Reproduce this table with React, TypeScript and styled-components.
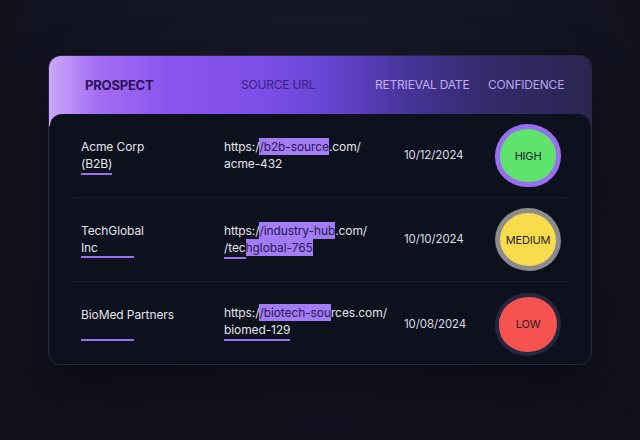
import React from "react";
import styled, { createGlobalStyle } from "styled-components";

const Global = createGlobalStyle`
  html, body { margin: 0; padding: 0; }
  body {
    width: 640px; height: 440px; overflow: hidden;
    background: radial-gradient(ellipse at 50% 30%, #181a2b 0%, #131422 55%, #0f1019 100%);
    font-family: Inter, "Noto Sans", sans-serif;
  }
`;

const Page = styled.div`
  width: 640px;
  height: 440px;
  box-sizing: border-box;
  padding: 55px 48px 0 48px;
`;

const Card = styled.div`
  width: 544px;
  height: 310px;
  box-sizing: border-box;
  border-radius: 13px;
  border: 1px solid rgba(150, 150, 200, 0.14);
  background: #141627;
  display: flex;
  flex-direction: column;
  overflow: hidden;
  box-shadow: 0 20px 50px rgba(0, 0, 0, 0.45);
`;

const Header = styled.div`
  height: 70px;
  flex: none;
  margin-bottom: -12px;
  background: linear-gradient(90deg, #c9a8f8 0%, #a46df4 9%, #8a55ee 22%, #7c4ee8 40%, #6644d0 52%, #47349a 66%, #342a6c 80%, #2a2650 100%);
  display: grid;
  grid-template-columns: 156px 134px 113px 1fr;
  padding: 21px 0 0 36px;
  box-sizing: border-box;
  font-size: 12px;
  letter-spacing: -0.2px;
`;

const HeadCell = styled.div<{ $color: string; $bold?: boolean }>`
  color: ${(p) => p.$color};
  font-weight: ${(p) => (p.$bold ? 700 : 400)};
  font-size: ${(p) => (p.$bold ? "13px" : "12px")};
  line-height: 16px;
`;

const Body = styled.div`
  flex: 1;
  margin: 0 1px 1px 1px;
  background: #0d101d;
  border-radius: 12px 12px 10px 10px;
  position: relative;
  display: flex;
  flex-direction: column;
  padding: 0 24px;
`;

const Row = styled.div<{ $last?: boolean }>`
  height: 84px;
  box-sizing: border-box;
  display: grid;
  grid-template-columns: 143px 180px 92px 66px;
  align-items: center;
  padding-left: 7px;
  border-bottom: ${(p) => (p.$last ? "none" : "1px solid #1b1e2d")};
`;

const Text = styled.div`
  color: #e4e4ec;
  font-size: 12px;
  line-height: 17px;
  letter-spacing: -0.1px;
`;

const NameCell = styled(Text)<{ $offset: number }>`
  align-self: start;
  padding-top: ${(p) => p.$offset}px;
`;

const Underline = styled.span`
  display: inline-block;
  border-bottom: 2px solid #9a6ff0;
  padding-bottom: 1px;
`;

const BarLine = styled.div<{ $w: number; $top: number }>`
  width: ${(p) => p.$w}px;
  height: 2px;
  background: #9a6ff0;
  margin-top: ${(p) => p.$top}px;
`;

const Mark = styled.span`
  background: #a37cf5;
  color: #2a1b55;
  padding: 1px 0;
`;

const UrlCell = styled(Text)<{ $offset: number }>`
  align-self: start;
  padding-top: ${(p) => p.$offset}px;
`;

const DateCell = styled(Text)`
  font-size: 11.5px;
  color: #dcdce6;
`;

const Badge = styled.div<{ $bg: string; $ring: string; $radius: string; $w: number }>`
  width: 66px;
  height: 63px;
  margin-left: -1px;
  box-sizing: border-box;
  border-radius: ${(p) => p.$radius};
  background: ${(p) => p.$bg};
  border: ${(p) => p.$w}px solid ${(p) => p.$ring};
  display: flex;
  align-items: center;
  justify-content: center;
  color: #1f2430;
  font-size: 11px;
  letter-spacing: -0.2px;
`;

export default function App() {
  return (
    <>
      <Global />
      <Page>
        <Card>
          <Header>
            <HeadCell $color="#2a1458" $bold>PROSPECT</HeadCell>
            <HeadCell $color="#3a2180">SOURCE URL</HeadCell>
            <HeadCell $color="#c4aef3">RETRIEVAL DATE</HeadCell>
            <HeadCell $color="#b9a4ef">CONFIDENCE</HeadCell>
          </Header>
          <Body>
            <Row>
              <NameCell $offset={24}>
                Acme Corp
                <br />
                <Underline>(B2B)</Underline>
              </NameCell>
              <UrlCell $offset={24}>
                https:/<Mark>/b2b-source</Mark>.com/
                <br />
                acme-432
              </UrlCell>
              <DateCell>10/12/2024</DateCell>
              <Badge $w={5} $bg="#5ee36c" $ring="#9a6ef2" $radius="50% 52% 48% 50% / 52% 50% 50% 48%">HIGH</Badge>
            </Row>
            <Row>
              <NameCell $offset={24}>
                TechGlobal
                <br />
                Inc
                <BarLine $w={53} $top={0} />
              </NameCell>
              <UrlCell $offset={24}>
                https:/<Mark>/industry-hub</Mark>.com/
                <br />
                <Underline>/tec</Underline>
                <Mark>hglobal-765</Mark>
              </UrlCell>
              <DateCell>10/10/2024</DateCell>
              <Badge $w={5} $bg="#f8dc4c" $ring="#8b8b8e" $radius="50% 50% 48% 52% / 50% 52% 48% 50%">MEDIUM</Badge>
            </Row>
            <Row $last>
              <NameCell $offset={24}>
                BioMed Partners
                <BarLine $w={53} $top={16} />
              </NameCell>
              <UrlCell $offset={22}>
                https:/<Mark>/biotech-sou</Mark>rces.com/
                <br />
                <Underline>biomed-129</Underline>
              </UrlCell>
              <DateCell>10/08/2024</DateCell>
              <Badge $w={4} $bg="#f65350" $ring="#252640" $radius="52% 48% 50% 50% / 50% 50% 52% 48%">LOW</Badge>
            </Row>
          </Body>
        </Card>
      </Page>
    </>
  );
}
